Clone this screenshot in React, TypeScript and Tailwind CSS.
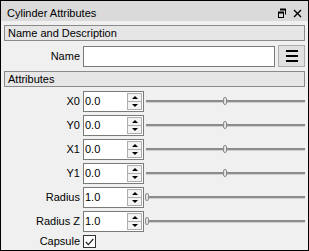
const fields = [
  { label: 'X0', value: '0.0', knob: 'left-[77px]' },
  { label: 'Y0', value: '0.0', knob: 'left-[77px]' },
  { label: 'X1', value: '0.0', knob: 'left-[77px]' },
  { label: 'Y1', value: '0.0', knob: 'left-[77px]' },
  { label: 'Radius', value: '1.0', knob: 'left-[-1px]' },
  { label: 'Radius Z', value: '1.0', knob: 'left-[-1px]' },
];

function SectionHeader({ title }: { title: string }) {
  return (
    <div className="ml-[3px] h-[16px] w-[301px] border border-[#8a8a8a] bg-[#e6e6e6] pl-[3px] pt-[1px] leading-[13px]">
      {title}
    </div>
  );
}

function SpinBox({ value }: { value: string }) {
  return (
    <div className="flex h-[21px] w-[61px] border border-[#7a7a7a] bg-white pr-[1px]">
      <span className="flex-1 self-center pl-[1px] leading-[13px]">{value}</span>
      <div className="flex flex-col pt-[1px]">
        <div className="flex h-[9px] w-[15px] items-center justify-center border border-[#adadad] bg-[#f3f3f3]">
          <span className="h-0 w-0 border-x-[3px] border-b-[3px] border-x-transparent border-b-black" />
        </div>
        <div className="flex h-[8px] w-[15px] items-center justify-center border border-t-0 border-[#adadad] bg-[#f3f3f3]">
          <span className="h-0 w-0 border-x-[3px] border-t-[3px] border-x-transparent border-t-black" />
        </div>
      </div>
    </div>
  );
}

function Slider({ knob }: { knob: string }) {
  return (
    <div className="relative h-[21px] w-[159px]">
      <div className="absolute left-0 right-0 top-[9px] h-[2px] bg-[#8c8c8c]" />
      <div className="absolute left-0 right-0 top-[11px] h-px bg-[#cfcfcf]" />
      <div className={`absolute top-[6px] h-[8px] w-[4px] rounded-full border border-[#8c8c8c] bg-[#e4e4e4] ${knob}`} />
    </div>
  );
}

export default function App() {
  return (
    <div className="flex h-[251px] w-[309px] flex-col border border-black bg-[#f0f0f0] text-[11px] text-black [font-family:'Liberation_Sans',Arial,sans-serif]">
      <div className="flex h-[20px] shrink-0 items-start bg-[#dadada] pl-[6px] pt-[6px] leading-[13px]">
        <span className="flex-1">Cylinder Attributes</span>
        <svg width="10" height="10" viewBox="0 0 10 10" className="mt-[1px] mr-[6px]" fill="none" stroke="black">
          <path d="M3.5 1.5h5v5" strokeWidth="1" />
          <path d="M3 1.5h6" strokeWidth="2" />
          <rect x="1.5" y="4.5" width="5" height="5" strokeWidth="1" />
          <path d="M1 4.5h6" strokeWidth="2" />
        </svg>
        <svg width="9" height="9" viewBox="0 0 9 9" className="mt-[2px] mr-[6px]" stroke="black" strokeWidth="1.4">
          <path d="M1 1l7 7M8 1l-7 7" />
        </svg>
      </div>

      <div className="mt-[4px]">
        <SectionHeader title="Name and Description" />
      </div>

      <div className="mt-[4px] flex h-[22px] items-center">
        <span className="w-[79px] text-right leading-[13px]">Name</span>
        <div className="ml-[3px] h-[21px] w-[192px] border border-[#7a7a7a] bg-white" />
        <button className="ml-[3px] flex h-[22px] w-[27px] flex-col items-center justify-center gap-[3px] border border-[#adadad] bg-[#e1e1e1]">
          <span className="h-[2px] w-[12px] bg-black" />
          <span className="h-[2px] w-[12px] bg-black" />
          <span className="h-[2px] w-[12px] bg-black" />
        </button>
      </div>

      <div className="mt-[4px]">
        <SectionHeader title="Attributes" />
      </div>

      <div className="mt-[4px] flex flex-col gap-[3px]">
        {fields.map((f) => (
          <div key={f.label} className="flex h-[21px] items-center">
            <span className="w-[79px] text-right leading-[13px]">{f.label}</span>
            <div className="ml-[3px]">
              <SpinBox value={f.value} />
            </div>
            <div className="ml-[2px]">
              <Slider knob={f.knob} />
            </div>
          </div>
        ))}
      </div>

      <div className="mt-[3px] flex h-[13px] items-center">
        <span className="w-[79px] text-right leading-[13px]">Capsule</span>
        <div className="ml-[3px] flex h-[13px] w-[13px] items-center justify-center border border-[#333333] bg-white">
          <svg width="9" height="8" viewBox="0 0 9 8" fill="none" stroke="#222" strokeWidth="1.2">
            <path d="M0.8 4l2.5 2.6L8.3 1" />
          </svg>
        </div>
      </div>
    </div>
  );
}
